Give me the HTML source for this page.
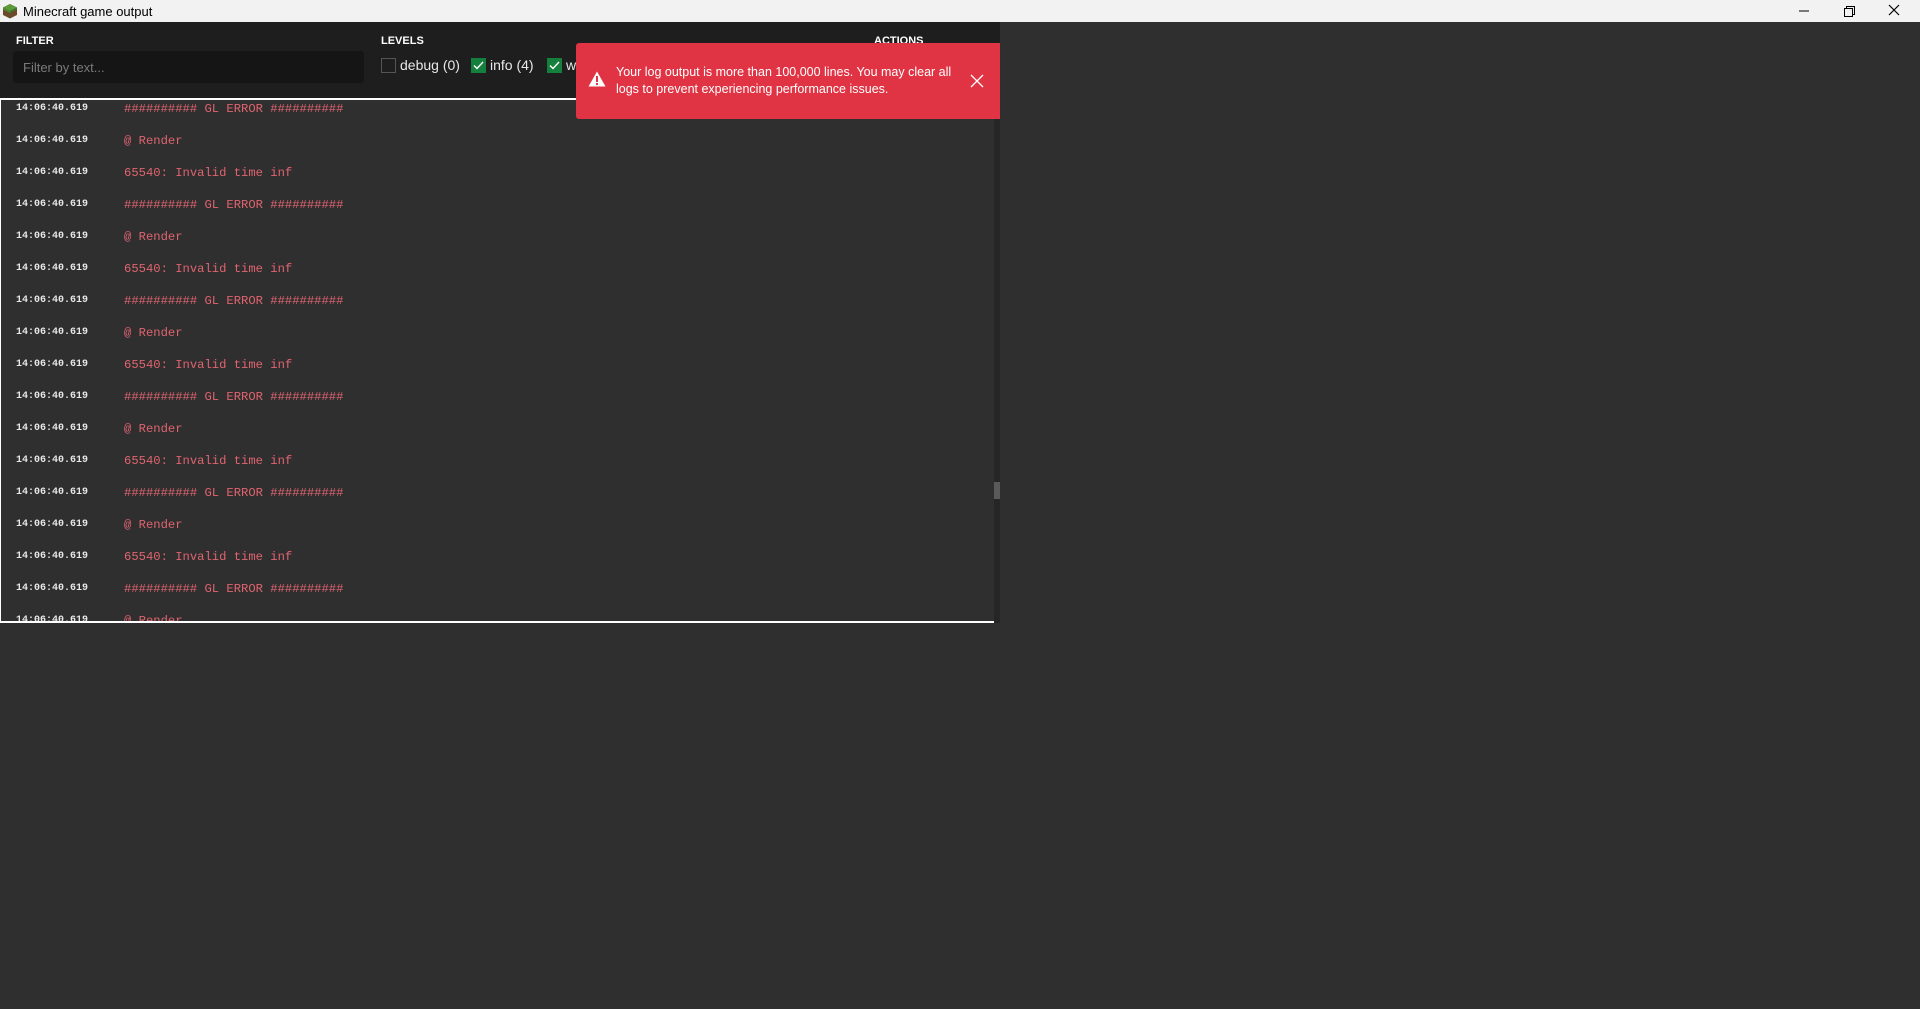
<!DOCTYPE html>
<html><head><meta charset="utf-8"><style>
*{margin:0;padding:0;box-sizing:border-box}
body{width:1920px;height:1009px;background:#2f2f2f;position:relative;overflow:hidden;font-family:"Liberation Sans",sans-serif}
.title{position:absolute;left:0;top:0;width:1920px;height:22px;background:#f2f2f2;color:#000;font-size:13px}
.title span{position:absolute;left:23px;top:4px}
.hdr{position:absolute;left:0;top:22px;width:1000px;height:76px;background:#1e1e1e}
.lbl{position:absolute;color:#fff;font-weight:bold;font-size:11px}
.inp{position:absolute;left:13px;top:51px;width:351px;height:32px;background:#151515;border-radius:3px;color:#7a7a7a;font-size:13px;padding:9px 10px}
.cb{position:absolute;top:58px;width:15px;height:15px}
.cb.off{border:1px solid #555}
.cb.on{background:#15803d}
.ct{position:absolute;top:57px;color:#e8e8e8;font-size:14px}
.log{position:absolute;left:0;top:98px;width:994px;height:525px;border-top:2px solid #fff;border-left:1px solid #fff;border-bottom:2px solid #fff;overflow:hidden}
.row{position:absolute;left:15px;height:20px;width:900px}
.ts{position:absolute;left:0;top:0;color:#e8e8e8;font:bold 10px "Liberation Mono",monospace}
.msg{position:absolute;left:108px;top:-1px;color:#e06470;font:12.2px "Liberation Mono",monospace}
.sb{position:absolute;left:994px;top:98px;width:6px;height:525px;background:#262626}
.th{position:absolute;left:994px;top:482px;width:6px;height:17px;background:#5a5a5a}
.toast{position:absolute;left:576px;top:43px;width:424px;height:76px;background:#e03444;border-radius:3px 0 0 3px;color:#fff;font-size:12.5px;line-height:16.5px}
</style></head><body>
<div class="title">
<svg style="position:absolute;left:2px;top:3px" width="16" height="16" viewBox="0 0 16 16"><path d="M8 1L15 4.5V12L8 15.5L1 12V4.5Z" fill="#6b4a2b"/><path d="M8 1L15 4.5L8 8L1 4.5Z" fill="#5c9a3a"/><path d="M1 4.5L8 8V10L1 6.5Z" fill="#4f8a30"/><path d="M15 4.5L8 8V10L15 6.5Z" fill="#3f7528"/></svg>
<span>Minecraft game output</span>
<svg style="position:absolute;left:1797px;top:4px" width="14" height="14"><line x1="2" y1="7" x2="12" y2="7" stroke="#000" stroke-width="1"/></svg>
<svg style="position:absolute;left:1842px;top:4px" width="14" height="14"><rect x="2.5" y="4.5" width="8" height="8" fill="none" stroke="#000"/><path d="M4.5 4.5V2.5H12.5V10.5H10.5" fill="none" stroke="#000"/></svg>
<svg style="position:absolute;left:1887px;top:3px" width="14" height="14"><path d="M2 2L12 12M12 2L2 12" stroke="#000" stroke-width="1.2"/></svg>
</div>
<div class="hdr"></div>
<div class="lbl" style="left:16px;top:35px">FILTER</div>
<div class="inp">Filter by text...</div>
<div class="lbl" style="left:381px;top:35px">LEVELS</div>
<div class="cb off" style="left:381px"></div><div class="ct" style="left:400px">debug (0)</div>
<div class="cb on" style="left:471px"><svg width="15" height="15"><path d="M3 7.5L6 10.5L12 4" stroke="#fff" stroke-width="1.4" fill="none"/></svg></div><div class="ct" style="left:490px">info (4)</div>
<div class="cb on" style="left:547px"><svg width="15" height="15"><path d="M3 7.5L6 10.5L12 4" stroke="#fff" stroke-width="1.4" fill="none"/></svg></div><div class="ct" style="left:566px">w</div>
<div class="lbl" style="left:874px;top:35px">ACTIONS</div>
<div class="log">
<div class="row" style="top:3px"><span class="ts">14:06:40.619</span><span class="msg">########## GL ERROR ##########</span></div>
<div class="row" style="top:35px"><span class="ts">14:06:40.619</span><span class="msg">@ Render</span></div>
<div class="row" style="top:67px"><span class="ts">14:06:40.619</span><span class="msg">65540: Invalid time inf</span></div>
<div class="row" style="top:99px"><span class="ts">14:06:40.619</span><span class="msg">########## GL ERROR ##########</span></div>
<div class="row" style="top:131px"><span class="ts">14:06:40.619</span><span class="msg">@ Render</span></div>
<div class="row" style="top:163px"><span class="ts">14:06:40.619</span><span class="msg">65540: Invalid time inf</span></div>
<div class="row" style="top:195px"><span class="ts">14:06:40.619</span><span class="msg">########## GL ERROR ##########</span></div>
<div class="row" style="top:227px"><span class="ts">14:06:40.619</span><span class="msg">@ Render</span></div>
<div class="row" style="top:259px"><span class="ts">14:06:40.619</span><span class="msg">65540: Invalid time inf</span></div>
<div class="row" style="top:291px"><span class="ts">14:06:40.619</span><span class="msg">########## GL ERROR ##########</span></div>
<div class="row" style="top:323px"><span class="ts">14:06:40.619</span><span class="msg">@ Render</span></div>
<div class="row" style="top:355px"><span class="ts">14:06:40.619</span><span class="msg">65540: Invalid time inf</span></div>
<div class="row" style="top:387px"><span class="ts">14:06:40.619</span><span class="msg">########## GL ERROR ##########</span></div>
<div class="row" style="top:419px"><span class="ts">14:06:40.619</span><span class="msg">@ Render</span></div>
<div class="row" style="top:451px"><span class="ts">14:06:40.619</span><span class="msg">65540: Invalid time inf</span></div>
<div class="row" style="top:483px"><span class="ts">14:06:40.619</span><span class="msg">########## GL ERROR ##########</span></div>
<div class="row" style="top:515px"><span class="ts">14:06:40.619</span><span class="msg">@ Render</span></div>
</div>
<div class="sb"></div><div class="th"></div>
<div class="toast">
<svg style="position:absolute;left:12px;top:28px" width="18" height="16" viewBox="0 0 18 16"><path d="M9 0.5L17.5 15.5H0.5Z" fill="#fff"/><rect x="8" y="5" width="2" height="6" fill="#e03444"/><rect x="8" y="12" width="2" height="2" fill="#e03444"/></svg>
<div style="position:absolute;left:40px;top:21px;width:350px">Your log output is more than 100,000 lines. You may clear all logs to prevent experiencing performance issues.</div>
<svg style="position:absolute;left:394px;top:31px" width="14" height="14"><path d="M1 1L13 13M13 1L1 13" stroke="#fff" stroke-width="1.3"/></svg>
</div>
</body></html>
